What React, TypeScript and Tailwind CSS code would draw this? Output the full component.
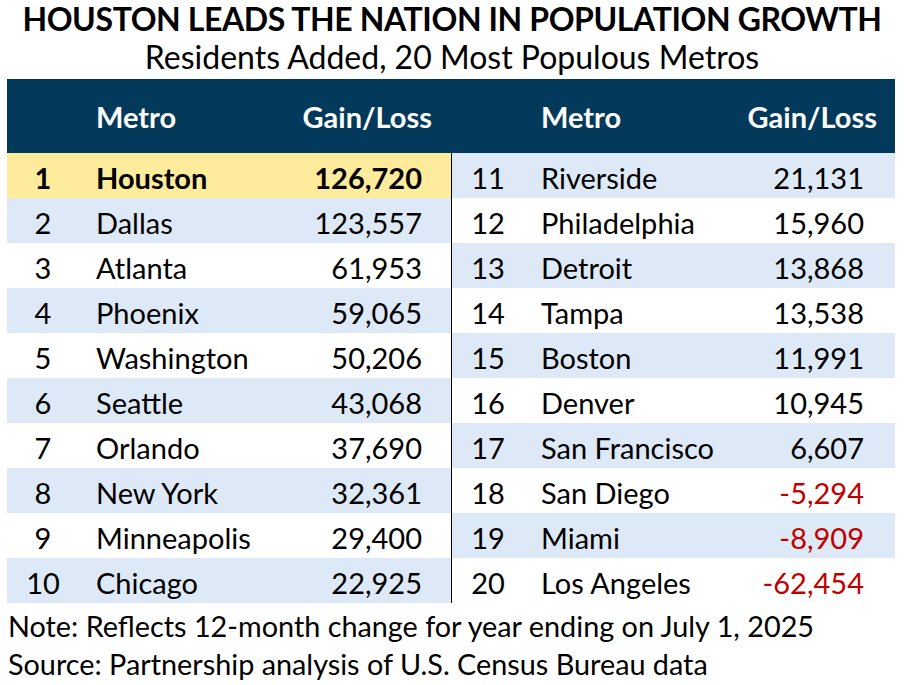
const left = [
  { rank: 1, metro: "Houston", value: "126,720" },
  { rank: 2, metro: "Dallas", value: "123,557" },
  { rank: 3, metro: "Atlanta", value: "61,953" },
  { rank: 4, metro: "Phoenix", value: "59,065" },
  { rank: 5, metro: "Washington", value: "50,206" },
  { rank: 6, metro: "Seattle", value: "43,068" },
  { rank: 7, metro: "Orlando", value: "37,690" },
  { rank: 8, metro: "New York", value: "32,361" },
  { rank: 9, metro: "Minneapolis", value: "29,400" },
  { rank: 10, metro: "Chicago", value: "22,925" },
];

const right = [
  { rank: 11, metro: "Riverside", value: "21,131" },
  { rank: 12, metro: "Philadelphia", value: "15,960" },
  { rank: 13, metro: "Detroit", value: "13,868" },
  { rank: 14, metro: "Tampa", value: "13,538" },
  { rank: 15, metro: "Boston", value: "11,991" },
  { rank: 16, metro: "Denver", value: "10,945" },
  { rank: 17, metro: "San Francisco", value: "6,607" },
  { rank: 18, metro: "San Diego", value: "-5,294" },
  { rank: 19, metro: "Miami", value: "-8,909" },
  { rank: 20, metro: "Los Angeles", value: "-62,454" },
];

type Row = { rank: number; metro: string; value: string };

function LeftRow({ row, i }: { row: Row; i: number }) {
  const bg = i === 0 ? "bg-[#ffeb9c]" : i % 2 === 1 ? "bg-[#dde9f6]" : "bg-white";
  const bold = i === 0 ? "font-bold" : "";
  return (
    <div className={`grid h-[45px] grid-cols-[72px_1fr_auto] items-center pt-[3px] ${bg} ${bold}`}>
      <span className="text-center">{row.rank}</span>
      <span className="pl-[17px]">{row.metro}</span>
      <span className="pr-[29px] text-right">{row.value}</span>
    </div>
  );
}

function RightRow({ row, i }: { row: Row; i: number }) {
  const bg = i % 2 === 0 ? "bg-[#dde9f6]" : "bg-white";
  const negative = row.value.startsWith("-");
  return (
    <div className={`grid h-[45px] grid-cols-[72px_1fr_auto] items-center pt-[3px] ${bg}`}>
      <span className="text-center">{row.rank}</span>
      <span className="pl-[17px]">{row.metro}</span>
      <span className={`pr-[31px] text-right ${negative ? "text-[#c00000]" : ""}`}>{row.value}</span>
    </div>
  );
}

export default function App() {
  return (
    <div className="h-[685px] w-[904px] bg-white font-['Lato',sans-serif] text-black">
      <div className="text-center">
        <h1 className="text-[32px] font-bold leading-[38px] tracking-[-0.4px]">HOUSTON LEADS THE NATION IN POPULATION GROWTH</h1>
        <p className="-mt-px text-[32px] leading-[40px]">Residents Added, 20 Most Populous Metros</p>
      </div>

      <div className="ml-[7px] mt-[2px] w-[888px] text-[29px]">
        <div className="grid h-[74px] grid-cols-[444px_1fr] items-center bg-[#033a5c] font-bold text-white">
          <div className="grid grid-cols-[72px_1fr_auto] pt-[2px]">
            <span />
            <span className="pl-[17px]">Metro</span>
            <span className="pr-[19px]">Gain/Loss</span>
          </div>
          <div className="grid grid-cols-[72px_1fr_auto] pl-px pt-[2px]">
            <span />
            <span className="pl-[17px]">Metro</span>
            <span className="pr-[18px]">Gain/Loss</span>
          </div>
        </div>

        <div className="flex">
          <div className="w-[444px]">
            {left.map((row, i) => (
              <LeftRow key={row.rank} row={row} i={i} />
            ))}
          </div>
          <div className="w-px bg-black" />
          <div className="flex-1">
            {right.map((row, i) => (
              <RightRow key={row.rank} row={row} i={i} />
            ))}
          </div>
        </div>
      </div>

      <div className="pl-[8px] text-[28.8px]">
        <p className="mt-[4px] leading-[38px]">Note: Reflects 12-month change for year ending on July 1, 2025</p>
        <p className="leading-[38px]">Source: Partnership analysis of U.S. Census Bureau data</p>
      </div>
    </div>
  );
}
